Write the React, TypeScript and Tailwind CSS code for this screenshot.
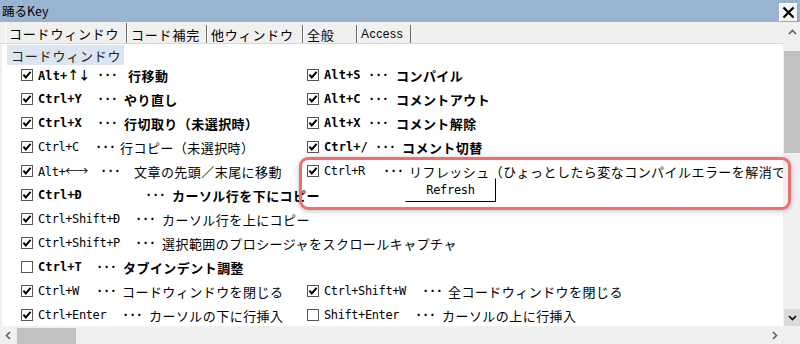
import { ReactNode } from 'react'

type Item = {
  on: boolean
  k: string
  b?: boolean
  kw: string // key column width (to the dots)
  dw: string // dots width (to the description)
  d: string
}

type Row = { l: Item; r?: Item; refresh?: boolean }

const mono = "font-[family-name:'DejaVu_Sans_Mono','Noto_Sans_CJK_JP',monospace]"
const jp = "font-[family-name:'Noto_Sans_CJK_JP','Liberation_Sans',sans-serif]"

const rows: Row[] = [
  {
    l: { on: true, b: true, k: 'Alt+↑↓', kw: 'w-[59px]', dw: 'w-[31px]', d: '行移動' },
    r: { on: true, b: true, k: 'Alt+S', kw: 'w-[44px]', dw: 'w-[28px]', d: 'コンパイル' },
  },
  {
    l: { on: true, b: true, k: 'Ctrl+Y', kw: 'w-[59px]', dw: 'w-[27px]', d: 'やり直し' },
    r: { on: true, b: true, k: 'Alt+C', kw: 'w-[44px]', dw: 'w-[28px]', d: 'コメントアウト' },
  },
  {
    l: { on: true, b: true, k: 'Ctrl+X', kw: 'w-[59px]', dw: 'w-[27px]', d: '行切取り（未選択時）' },
    r: { on: true, b: true, k: 'Alt+X', kw: 'w-[44px]', dw: 'w-[28px]', d: 'コメント解除' },
  },
  {
    l: { on: true, k: 'Ctrl+C', kw: 'w-[57px]', dw: 'w-[25px]', d: '行コピー（未選択時）' },
    r: { on: true, b: true, k: 'Ctrl+/', kw: 'w-[51px]', dw: 'w-[27px]', d: 'コメント切替' },
  },
  {
    l: { on: true, k: 'Alt+←→', kw: 'w-[62px]', dw: 'w-[34px]', d: '文章の先頭／末尾に移動' },
    r: { on: true, k: 'Ctrl+R', kw: 'w-[59px]', dw: 'w-[26px]', d: 'リフレッシュ（ひょっとしたら変なコンパイルエラーを解消できるかも）' },
  },
  {
    l: { on: true, b: true, k: 'Ctrl+Đ', kw: 'w-[107px]', dw: 'w-[27px]', d: 'カーソル行を下にコピー' },
    refresh: true,
  },
  { l: { on: true, k: 'Ctrl+Shift+Đ', kw: 'w-[97px]', dw: 'w-[27px]', d: 'カーソル行を上にコピー' } },
  { l: { on: true, k: 'Ctrl+Shift+P', kw: 'w-[97px]', dw: 'w-[27px]', d: '選択範囲のプロシージャをスクロールキャプチャ' } },
  { l: { on: false, b: true, k: 'Ctrl+T', kw: 'w-[58px]', dw: 'w-[27px]', d: 'タブインデント調整' } },
  {
    l: { on: true, k: 'Ctrl+W', kw: 'w-[58px]', dw: 'w-[26px]', d: 'コードウィンドウを閉じる' },
    r: { on: true, k: 'Ctrl+Shift+W', kw: 'w-[98px]', dw: 'w-[26px]', d: '全コードウィンドウを閉じる' },
  },
  {
    l: { on: true, k: 'Ctrl+Enter', kw: 'w-[84px]', dw: 'w-[27px]', d: 'カーソルの下に行挿入' },
    r: { on: false, k: 'Shift+Enter', kw: 'w-[91px]', dw: 'w-[27px]', d: 'カーソルの上に行挿入' },
  },
]

const tabs = [
  { t: 'コードウィンドウ', w: 'w-[122px]', sel: true },
  { t: 'コード補完', w: 'w-[80px]' },
  { t: '他ウィンドウ', w: 'w-[96px]' },
  { t: '全般', w: 'w-[54px]' },
  { t: 'Access', w: 'w-[54px]', latin: true },
]

function Check({ on }: { on: boolean }) {
  return (
    <svg width="12" height="12" viewBox="0 0 12 12" className="shrink-0">
      <rect x="0.5" y="0.5" width="11" height="11" fill="#fff" stroke="#555" />
      {on && <path d="M2.4 5.6 L4.8 8.5 L9.6 2.8" fill="none" stroke="#000" strokeWidth="2" />}
    </svg>
  )
}

// arrows come out tiny in the mono face, so hand them to the CJK one
function KeyText({ k }: { k: string }) {
  const m = k.match(/^([^↑↓←→]*)([↑↓←→]*)$/)
  if (!m || !m[2]) return <>{k}</>
  return (
    <>
      {m[1]}
      <span className={`${jp} text-[12px] tracking-[-1px]`}>{m[2]}</span>
    </>
  )
}

function Entry({ it }: { it: Item }) {
  return (
    <div className={`flex items-center whitespace-nowrap text-black ${it.b ? 'font-bold' : 'font-normal'}`}>
      <Check on={it.on} />
      <span
        className={`${mono} ${it.kw} ml-[5px] shrink-0 leading-none ${
          it.b ? 'text-[12px] tracking-[0.1px]' : 'text-[12px] tracking-[-0.4px]'
        }`}
      >
        <KeyText k={it.k} />
      </span>
      <span className={`${mono} ${it.dw} shrink-0 text-[12px] font-bold tracking-[-0.3px] leading-none`}>···</span>
      <span className={`${jp} text-[13px] tracking-[0.45px] leading-none`}>{it.d}</span>
    </div>
  )
}

function Chevron({ d, color = '#606060' }: { d: string; color?: string }) {
  return (
    <svg width="9" height="9" viewBox="0 0 9 9">
      <path d={d} fill="none" stroke={color} strokeWidth="1.6" />
    </svg>
  )
}

function Tab({ children, w, sel }: { children: ReactNode; w: string; sel?: boolean }) {
  return (
    <div
      className={`${w} flex items-center pl-[3px] border-l border-l-white border-r border-r-[#6a6a6a] ${
        sel ? 'h-[20px]' : 'h-[18px]'
      }`}
    >
      {children}
    </div>
  )
}

export default function App() {
  return (
    <div className="relative w-[800px] h-[344px] overflow-hidden flex flex-col bg-[#f0f0f0] select-none">
      {/* title bar */}
      <div className="h-[22px] bg-[#99b4d1] flex items-center justify-between pl-[2px] pr-[2px] shrink-0">
        <span className={`${jp} text-[12.5px] text-black leading-none`}>踊るKey</span>
        <div className="w-[19px] h-[19px] mt-[2px] bg-[#f4f4f4] border border-[#a0a0a0] border-t-white border-l-white flex items-center justify-center">
          <svg width="13" height="13" viewBox="0 0 13 13">
            <path d="M1.5 1.5 L11.5 11.5 M11.5 1.5 L1.5 11.5" stroke="#000" strokeWidth="2.2" />
          </svg>
        </div>
      </div>

      {/* middle */}
      <div className="flex flex-1 min-h-0">
        <div className="flex-1 flex flex-col min-w-0">
          {/* tab strip */}
          <div className="h-[22px] shrink-0 flex items-end pl-[5px] border-b border-[#d9d9d9]">
            {tabs.map((t) => (
              <Tab key={t.t} w={t.w} sel={t.sel}>
                <span
                  className={
                    t.latin
                      ? "font-[family-name:'Liberation_Sans',sans-serif] text-[12px] tracking-[0.6px] text-black leading-none"
                      : `${jp} text-[13px] tracking-[0.8px] text-black leading-none`
                  }
                >
                  {t.t}
                </span>
              </Tab>
            ))}
          </div>

          {/* page */}
          <div className="flex-1 min-h-0 ml-[2px] bg-white overflow-hidden">
            <div className="ml-[5px] mt-px w-[117px] h-[20px] bg-[#dce6f1] flex items-center pl-[4px]">
              <span className={`${jp} text-[13px] tracking-[0.8px] text-[#222] leading-none whitespace-nowrap`}>
                コードウィンドウ
              </span>
            </div>
            <div className="-mt-[2px] pl-[19px] flex flex-col">
              {rows.map((row, i) => (
                <div key={i} className="h-[24px] flex items-center">
                  <div className="w-[286px] shrink-0">
                    <Entry it={row.l} />
                  </div>
                  {row.r && <Entry it={row.r} />}
                  {row.refresh && (
                    <button className="ml-[98px] -mt-[11px] w-[91px] h-[24px] bg-white border border-white border-r-black border-b-black flex items-center justify-center">
                      <span className={`${mono} text-[12px] font-normal tracking-[-0.3px] text-black leading-none`}>
                        Refresh
                      </span>
                    </button>
                  )}
                </div>
              ))}
            </div>
          </div>
        </div>

        {/* vertical scrollbar */}
        <div className="w-[17px] shrink-0 flex flex-col bg-[#f0f0f0] pl-px">
          <div className="h-[29px] flex items-start justify-center pt-[6px]">
            <Chevron d="M1 6 L4.5 2.5 L8 6" />
          </div>
          <div className="h-[102px] bg-[#c1c1c1]" />
          <div className="flex-1" />
          <div className="h-[17px] bg-[#dadada] flex items-center justify-center">
            <Chevron d="M1 3 L4.5 6.5 L8 3" color="#000" />
          </div>
        </div>
      </div>

      {/* horizontal scrollbar */}
      <div className="h-[18px] shrink-0 flex items-center bg-[#f0f0f0]">
        <div className="w-[17px] flex items-center justify-center">
          <Chevron d="M6 1 L2.5 4.5 L6 8" />
        </div>
        <div className="w-[59px] h-[16px] bg-[#c1c1c1] mt-px" />
        <div className="flex-1" />
        <div className="w-[17px] flex items-center justify-center">
          <Chevron d="M3 1 L6.5 4.5 L3 8" />
        </div>
        <div className="w-[17px]" />
      </div>

      {/* highlight annotation */}
      <div className="absolute left-[299px] top-[157px] w-[492px] h-[53px] rounded-[9px] border-[3px] border-[#ee6f6f] shadow-[0_1px_5px_rgba(0,0,0,0.25)] pointer-events-none" />
    </div>
  )
}
